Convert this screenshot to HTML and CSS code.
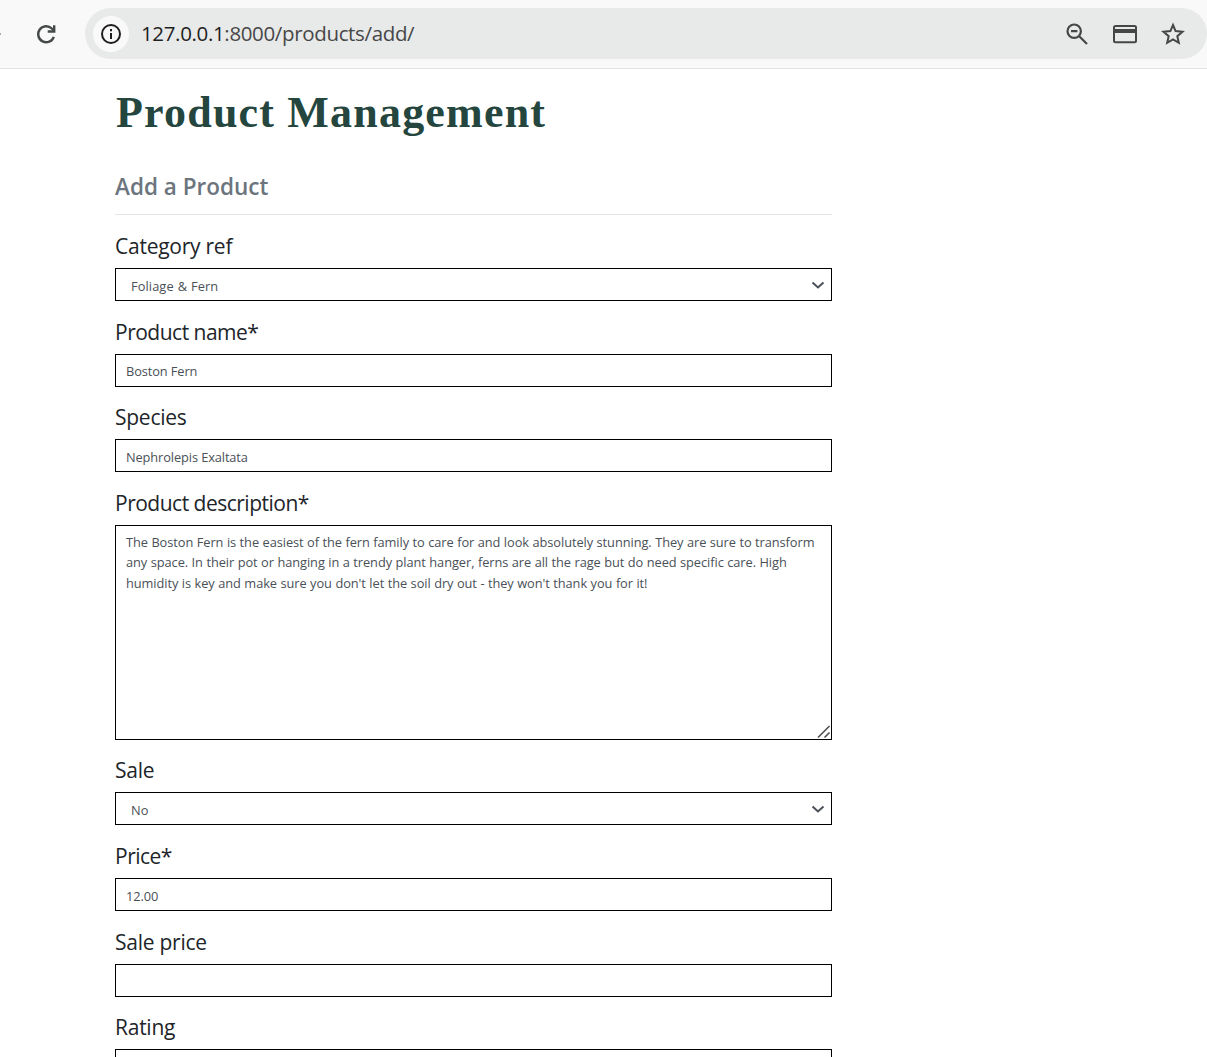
FILE: index.html
```html
<!DOCTYPE html>
<html lang="en">
<head>
<meta charset="utf-8">
<title>Product Management</title>
<link rel="stylesheet" href="styles.css">
</head>
<body>
<header class="toolbar">
  <span class="edge-mark"></span>
  <svg class="reload" width="24" height="24" viewBox="0 0 24 24" fill="none" stroke="#454a49" stroke-width="2.4"><path d="M19.8 14.8A8 8 0 1 1 17.8 6.5L20 8.7"/><path d="M20.2 3.2v6.3h-6.5"/></svg>
  <div class="address">
    <span class="info"><svg width="22" height="22" viewBox="0 0 22 22" fill="none" stroke="#1f1f1f" stroke-width="2"><circle cx="11" cy="11" r="9"/><path d="M11 10v6M11 6v2.2"/></svg></span>
    <span class="url"><span class="host">127.0.0.1</span><span class="path">:8000/products/add/</span></span>
    <div class="actions">
      <svg width="24" height="24" viewBox="0 0 24 24" fill="none" stroke="#454746" stroke-width="2.2"><circle cx="9.2" cy="9.2" r="6.7"/><path d="M14 14l8 8M6 9.2h6.4"/></svg>
      <svg width="24" height="24" viewBox="0 0 24 24" fill="none" stroke="#454746" stroke-width="2"><rect x="1" y="4" width="22" height="16.2" rx="1.5"/><path d="M1 9h22" stroke-width="4"/></svg>
      <svg width="24" height="24" viewBox="0 0 24 24" fill="none" stroke="#454746" stroke-width="2"><path d="M12 3l2.6 6.1 6.9.6-5.2 4.5 1.5 6.6L12 17.3l-5.8 3.5 1.5-6.6-5.2-4.5 6.9-.6z"/></svg>
    </div>
  </div>
</header>
<main class="content">
  <h1 class="title">Product Management</h1>
  <h2 class="subtitle">Add a Product</h2>
  <form class="form">
    <div class="group">
      <label class="label" for="category">Category ref</label>
      <div class="select-box">
        <select class="control select" id="category"><option>Foliage &amp; Fern</option></select>
        <svg class="chevron" width="14" height="9" viewBox="0 0 14 9" fill="none" stroke="#495057" stroke-width="2"><path d="M1.5 1.5L7 6.5l5.5-5"/></svg>
      </div>
    </div>
    <div class="group">
      <label class="label starred" for="name">Product name*</label>
      <input class="control" id="name" type="text" value="Boston Fern">
    </div>
    <div class="group">
      <label class="label" for="species">Species</label>
      <input class="control low" id="species" type="text" value="Nephrolepis Exaltata">
    </div>
    <div class="group">
      <label class="label starred" for="description">Product description*</label>
      <div class="area-box">
        <textarea class="control area" id="description">The Boston Fern is the easiest of the fern family to care for and look absolutely stunning. They are sure to transform any space. In their pot or hanging in a trendy plant hanger, ferns are all the rage but do need specific care. High humidity is key and make sure you don't let the soil dry out - they won't thank you for it!</textarea>
        <svg class="grip" width="14" height="14" viewBox="0 0 14 14" fill="none" stroke="#555" stroke-width="1.7"><path d="M1 12.5L12.5 1M7.5 12.5l5-5"/></svg>
      </div>
    </div>
    <div class="group">
      <label class="label" for="sale">Sale</label>
      <div class="select-box">
        <select class="control select" id="sale"><option>No</option></select>
        <svg class="chevron" width="14" height="9" viewBox="0 0 14 9" fill="none" stroke="#495057" stroke-width="2"><path d="M1.5 1.5L7 6.5l5.5-5"/></svg>
      </div>
    </div>
    <div class="group">
      <label class="label starred" for="price">Price*</label>
      <input class="control low" id="price" type="text" value="12.00">
    </div>
    <div class="group">
      <label class="label" for="sale-price">Sale price</label>
      <input class="control" id="sale-price" type="text">
    </div>
    <div class="group">
      <label class="label" for="rating">Rating</label>
      <input class="control" id="rating" type="text">
    </div>
  </form>
</main>
</body>
</html>
```
FILE: styles.css
```css
* { box-sizing: border-box; }
html { height: 100%; overflow: hidden; }
body {
  margin: 0;
  height: 100%;
  overflow: hidden;
  background: #fff;
  color: #212529;
  font-family: "Open Sans", "Noto Sans", sans-serif;
}
svg { display: block; flex: none; }
.toolbar {
  display: flex;
  align-items: center;
  height: 69px;
  padding-bottom: 1px;
  border-bottom: 1px solid #e1e2e2;
  background: #f9f9f9;
}
.edge-mark { width: 1px; height: 2px; background: #aaa; }
.reload { margin-left: 33px; }
.address {
  display: flex;
  align-items: center;
  flex: 1;
  height: 51px;
  margin-left: 27px;
  padding: 0 22px 0 8px;
  border-radius: 26px;
  background: #e8eae9;
}
.info {
  display: flex;
  align-items: center;
  justify-content: center;
  width: 36px;
  height: 36px;
  border-radius: 50%;
  background: #f9f9f9;
}
.url {
  margin-left: 12px;
  padding-bottom: 2px;
  font-size: 20.5px;
  letter-spacing: -0.35px;
  white-space: nowrap;
}
.host { color: #1f1f1f; }
.path { color: #474747; }
.actions { display: flex; gap: 24px; margin-left: auto; }
.content { width: 717px; margin-left: 115px; }
.title {
  margin: 0;
  padding-top: 16px;
  padding-left: 1px;
  height: 87px;
  color: #24463e;
  font: bold 44px/56px "Liberation Serif", serif;
  letter-spacing: 1.2px;
  white-space: nowrap;
}
.subtitle {
  margin: 0;
  padding-top: 14px;
  height: 59px;
  border-bottom: 1px solid #e3e4e5;
  color: #6c757d;
  font-size: 22.5px;
  font-weight: 600;
  line-height: 34px;
}
.form { padding-top: 17px; }
.group { display: flex; flex-direction: column; margin-bottom: 16.67px; }
.label {
  height: 36px;
  font-size: 21px;
  line-height: 28px;
  letter-spacing: -0.25px;
}
.starred { letter-spacing: -0.5px; }
.control {
  display: block;
  width: 100%;
  height: 33px;
  margin: 0;
  padding: 1px 10px 0;
  border: 1px solid #000;
  border-radius: 0;
  outline: 0;
  background: #fff;
  color: #495057;
  font-family: inherit;
  font-size: 12.8px;
  letter-spacing: -0.1px;
  appearance: none;
}
.low { padding-top: 3px; }
.select-box, .area-box { position: relative; }
.select { padding: 2px 15px 0; letter-spacing: 0.1px; word-spacing: 0.5px; }
.chevron { position: absolute; right: 7.5px; top: 12.5px; }
.area {
  height: 214.8px;
  padding: 6px 10px;
  line-height: 20.5px;
  letter-spacing: -0.06px;
  word-spacing: 0.25px;
  resize: none;
  overflow: hidden;
}
.grip { position: absolute; right: 1.5px; bottom: 1px; }
```
